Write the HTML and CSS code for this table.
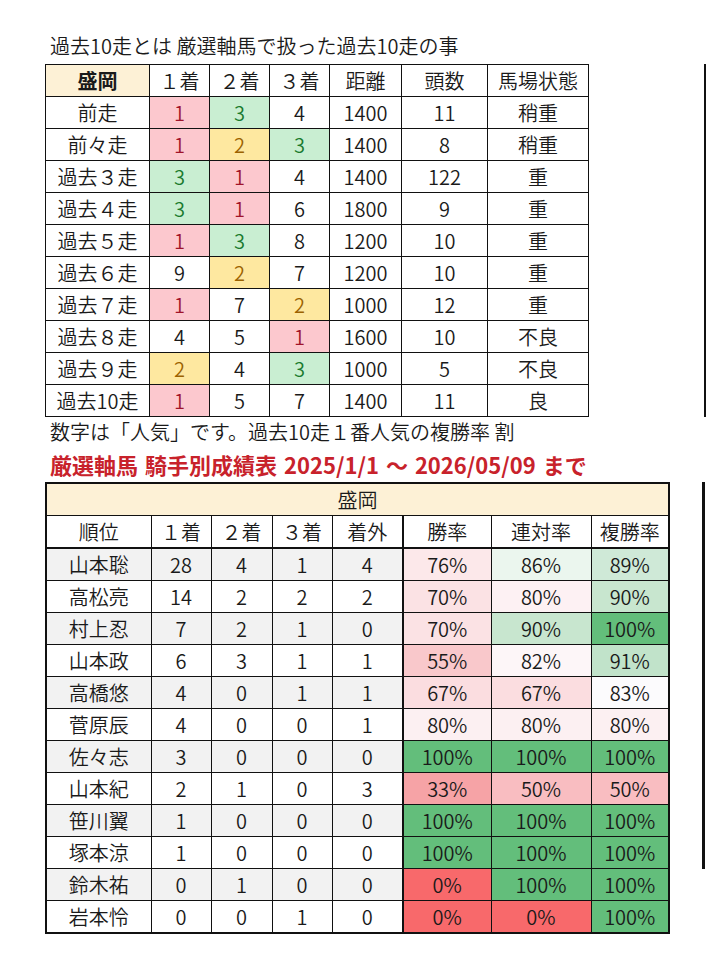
FILE: index.html
```html
<!DOCTYPE html>
<html lang="ja">
<head>
<meta charset="utf-8">
<title>厳選軸馬 過去10走</title>
<link rel="stylesheet" href="styles.css">
</head>
<body>
<div class="page">
  <p class="caption">過去10走とは 厳選軸馬で扱った過去10走の事</p>
  <div class="section">
    <table class="past">
      <colgroup>
        <col style="width:104px"><col style="width:60px"><col style="width:60px"><col style="width:60px"><col style="width:72px"><col style="width:86px"><col style="width:101px">
      </colgroup>
      <tr><th class="venue">盛岡</th><td>１着</td><td>２着</td><td>３着</td><td>距離</td><td>頭数</td><td>馬場状態</td></tr>
      <tr><td>前走</td><td class="p1">1</td><td class="p3">3</td><td>4</td><td>1400</td><td>11</td><td>稍重</td></tr>
      <tr><td>前々走</td><td class="p1">1</td><td class="p2">2</td><td class="p3">3</td><td>1400</td><td>8</td><td>稍重</td></tr>
      <tr><td>過去３走</td><td class="p3">3</td><td class="p1">1</td><td>4</td><td>1400</td><td>122</td><td>重</td></tr>
      <tr><td>過去４走</td><td class="p3">3</td><td class="p1">1</td><td>6</td><td>1800</td><td>9</td><td>重</td></tr>
      <tr><td>過去５走</td><td class="p1">1</td><td class="p3">3</td><td>8</td><td>1200</td><td>10</td><td>重</td></tr>
      <tr><td>過去６走</td><td>9</td><td class="p2">2</td><td>7</td><td>1200</td><td>10</td><td>重</td></tr>
      <tr><td>過去７走</td><td class="p1">1</td><td>7</td><td class="p2">2</td><td>1000</td><td>12</td><td>重</td></tr>
      <tr><td>過去８走</td><td>4</td><td>5</td><td class="p1">1</td><td>1600</td><td>10</td><td>不良</td></tr>
      <tr><td>過去９走</td><td class="p2">2</td><td>4</td><td class="p3">3</td><td>1000</td><td>5</td><td>不良</td></tr>
      <tr><td>過去10走</td><td class="p1">1</td><td>5</td><td>7</td><td>1400</td><td>11</td><td>良</td></tr>
    </table>
    <div class="edge edge-top"></div>
  </div>
  <p class="note">数字は「人気」です。過去10走１番人気の複勝率 割</p>
  <p class="title">厳選軸馬 騎手別成績表 2025/1/1 ～ 2026/05/09 まで</p>
  <div class="section">
    <table class="jockey">
      <colgroup>
        <col style="width:105px"><col style="width:60px"><col style="width:61px"><col style="width:60px"><col style="width:71px"><col style="width:88px"><col style="width:100px"><col style="width:78px">
      </colgroup>
      <tr class="head"><td colspan="8">盛岡</td></tr>
      <tr class="cols"><td>順位</td><td>１着</td><td>２着</td><td>３着</td><td>着外</td><td class="r">勝率</td><td>連対率</td><td>複勝率</td></tr>
      <tr class="g"><td>山本聡</td><td>28</td><td>4</td><td>1</td><td>4</td><td class="r" style="background:#fce8ea">76%</td><td style="background:#ebf6ee">86%</td><td style="background:#cfe9d7">89%</td></tr>
      <tr><td>高松亮</td><td>14</td><td>2</td><td>2</td><td>2</td><td class="r" style="background:#fbe2e4">70%</td><td style="background:#fdf1f3">80%</td><td style="background:#c8e6cf">90%</td></tr>
      <tr class="g"><td>村上忍</td><td>7</td><td>2</td><td>1</td><td>0</td><td class="r" style="background:#fbe2e4">70%</td><td style="background:#c8e6cf">90%</td><td style="background:#63be7b">100%</td></tr>
      <tr><td>山本政</td><td>6</td><td>3</td><td>1</td><td>1</td><td class="r" style="background:#f9c8cb">55%</td><td style="background:#fdf6f8">82%</td><td style="background:#c1e3ca">91%</td></tr>
      <tr class="g"><td>高橋悠</td><td>4</td><td>0</td><td>1</td><td>1</td><td class="r" style="background:#fbdde0">67%</td><td style="background:#fbdde0">67%</td><td style="background:#fcfbfd">83%</td></tr>
      <tr><td>菅原辰</td><td>4</td><td>0</td><td>0</td><td>1</td><td class="r" style="background:#fcf0f2">80%</td><td style="background:#fcf0f2">80%</td><td style="background:#fcf0f2">80%</td></tr>
      <tr class="g"><td>佐々志</td><td>3</td><td>0</td><td>0</td><td>0</td><td class="r" style="background:#63be7b">100%</td><td style="background:#63be7b">100%</td><td style="background:#63be7b">100%</td></tr>
      <tr><td>山本紀</td><td>2</td><td>1</td><td>0</td><td>3</td><td class="r" style="background:#f6a3a6">33%</td><td style="background:#f9bdc1">50%</td><td style="background:#f9bdc1">50%</td></tr>
      <tr class="g"><td>笹川翼</td><td>1</td><td>0</td><td>0</td><td>0</td><td class="r" style="background:#63be7b">100%</td><td style="background:#63be7b">100%</td><td style="background:#63be7b">100%</td></tr>
      <tr><td>塚本涼</td><td>1</td><td>0</td><td>0</td><td>0</td><td class="r" style="background:#63be7b">100%</td><td style="background:#63be7b">100%</td><td style="background:#63be7b">100%</td></tr>
      <tr class="g"><td>鈴木祐</td><td>0</td><td>1</td><td>0</td><td>0</td><td class="r" style="background:#f8696b">0%</td><td style="background:#63be7b">100%</td><td style="background:#63be7b">100%</td></tr>
      <tr><td>岩本怜</td><td>0</td><td>0</td><td>1</td><td>0</td><td class="r" style="background:#f8696b">0%</td><td style="background:#f8696b">0%</td><td style="background:#63be7b">100%</td></tr>
    </table>
    <div class="edge edge-bottom"></div>
  </div>
</div>
</body>
</html>
```

FILE: styles.css
```css
html, body {
  margin: 0;
  padding: 0;
  background: #ffffff;
}

body {
  font-family: "Noto Sans CJK JP", "Noto Sans", sans-serif;
  font-weight: 350;
  color: #1a1a1a;
  width: 706px;
}

.page {
  padding: 34px 0 0 45px;
}

.caption,
.note,
.title {
  margin: 0;
  padding-left: 5px;
  font-size: 20px;
  line-height: 24px;
  white-space: nowrap;
}

.caption {
  margin-bottom: 6px;
}

.note {
  margin-top: 3px;
}

.title {
  margin-top: 8px;
  margin-bottom: 6px;
  font-size: 22px;
  word-spacing: 2px;
  font-weight: bold;
  color: #c8222b;
}

.section {
  display: flex;
  justify-content: space-between;
  align-items: stretch;
}

table {
  border-collapse: collapse;
  table-layout: fixed;
  font-size: 20px;
}

td, th {
  padding: 0;
  text-align: center;
  vertical-align: middle;
  white-space: nowrap;
  font-weight: 350;
  line-height: 24px;
}

.past {
  width: 543px;
}

.past td, .past th {
  border: 1px solid #111;
  height: 31px;
}

.past th.venue {
  background: #fdf1d6;
  font-weight: bold;
}

.p1 { background: #fcc8ce; color: #a0142a; }
.p2 { background: #fee8a0; color: #9c6200; }
.p3 { background: #c9eed2; color: #1a7a2e; }

.jockey {
  width: 623px;
  border: 2px solid #111;
}

.jockey td {
  border: 1px solid #111;
  height: 31px;
}

.jockey tr.head td {
  background: #fdf1d6;
  border: 2px solid #111;
  border-bottom: 1px solid #111;
}

.jockey tr.cols td {
  border-bottom: 2px solid #111;
}

.jockey td.r {
  border-left: 2px solid #111;
}

.jockey tr.g td:nth-child(-n+5) {
  background: #f2f2f2;
}

.edge {
  background: #111;
}

.edge-top {
  width: 2px;
}

.edge-bottom {
  width: 3px;
  height: 387px;
  align-self: flex-start;
  margin-right: 1px;
}
```
